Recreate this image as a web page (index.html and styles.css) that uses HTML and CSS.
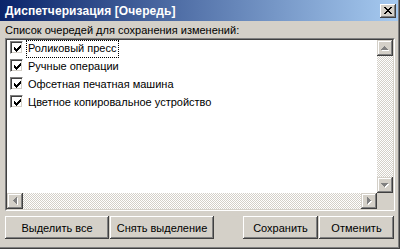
FILE: index.html
```html
<!DOCTYPE html>
<html lang="ru">
<head>
    <meta charset="UTF-8">
    <title>Диспетчеризация [Очередь]</title>
    <link rel="stylesheet" href="styles.css">
</head>
<body>
    <div class="window">
        <div class="titlebar">
            <span class="title">Диспетчеризация [Очередь]</span>
            <button class="close-btn">
                <svg width="8" height="7" viewBox="0 0 8 7" shape-rendering="crispEdges">
                    <path d="M0 0h2v1h-2zM6 0h2v1h-2zM1 1h2v1h-2zM5 1h2v1h-2zM2 2h4v1h-4zM3 3h2v1h-2zM2 4h4v1h-4zM1 5h2v1h-2zM5 5h2v1h-2zM0 6h2v1h-2zM6 6h2v1h-2z" fill="#000"/>
                </svg>
            </button>
        </div>

        <div class="content">
            <div class="label">Список очередей для сохранения изменений:</div>

            <div class="listbox">
                <div class="items">
                    <div class="item">
                        <span class="checkbox"><svg width="7" height="7" viewBox="0 0 7 7" shape-rendering="crispEdges"><path d="M0 2h1v3h-1zM1 3h1v3h-1zM2 4h1v3h-1zM3 3h1v3h-1zM4 2h1v3h-1zM5 1h1v3h-1zM6 0h1v3h-1z" fill="#000"/></svg></span>
                        <span class="item-text focused">Роликовый пресс</span>
                    </div>
                    <div class="item">
                        <span class="checkbox"><svg width="7" height="7" viewBox="0 0 7 7" shape-rendering="crispEdges"><path d="M0 2h1v3h-1zM1 3h1v3h-1zM2 4h1v3h-1zM3 3h1v3h-1zM4 2h1v3h-1zM5 1h1v3h-1zM6 0h1v3h-1z" fill="#000"/></svg></span>
                        <span class="item-text">Ручные операции</span>
                    </div>
                    <div class="item">
                        <span class="checkbox"><svg width="7" height="7" viewBox="0 0 7 7" shape-rendering="crispEdges"><path d="M0 2h1v3h-1zM1 3h1v3h-1zM2 4h1v3h-1zM3 3h1v3h-1zM4 2h1v3h-1zM5 1h1v3h-1zM6 0h1v3h-1z" fill="#000"/></svg></span>
                        <span class="item-text">Офсетная печатная машина</span>
                    </div>
                    <div class="item">
                        <span class="checkbox"><svg width="7" height="7" viewBox="0 0 7 7" shape-rendering="crispEdges"><path d="M0 2h1v3h-1zM1 3h1v3h-1zM2 4h1v3h-1zM3 3h1v3h-1zM4 2h1v3h-1zM5 1h1v3h-1zM6 0h1v3h-1z" fill="#000"/></svg></span>
                        <span class="item-text">Цветное копировальное устройство</span>
                    </div>
                </div>

                <!-- vertical scrollbar (disabled) -->
                <div class="vscroll">
                    <span class="arrow-btn">
                        <svg width="8" height="5" viewBox="0 0 8 5" shape-rendering="crispEdges"><path d="M4 1h1v1h-1zM3 2h3v1h-3zM2 3h5v1h-5zM1 4h7v1h-7z" fill="#fff"/><path d="M3 0h1v1h-1zM2 1h3v1h-3zM1 2h5v1h-5zM0 3h7v1h-7z" fill="#808080"/></svg>
                    </span>
                    <span class="track"></span>
                    <span class="arrow-btn">
                        <svg width="8" height="5" viewBox="0 0 8 5" shape-rendering="crispEdges"><path d="M1 1h7v1h-7zM2 2h5v1h-5zM3 3h3v1h-3zM4 4h1v1h-1z" fill="#fff"/><path d="M0 0h7v1h-7zM1 1h5v1h-5zM2 2h3v1h-3zM3 3h1v1h-1z" fill="#808080"/></svg>
                    </span>
                </div>

                <!-- horizontal scrollbar (disabled) -->
                <div class="hscroll">
                    <span class="arrow-btn">
                        <svg width="5" height="8" viewBox="0 0 5 8" shape-rendering="crispEdges"><path d="M1 4h1v1h-1zM2 3h1v3h-1zM3 2h1v5h-1zM4 1h1v7h-1z" fill="#fff"/><path d="M0 3h1v1h-1zM1 2h1v3h-1zM2 1h1v5h-1zM3 0h1v7h-1z" fill="#808080"/></svg>
                    </span>
                    <span class="track"></span>
                    <span class="arrow-btn">
                        <svg width="5" height="8" viewBox="0 0 5 8" shape-rendering="crispEdges"><path d="M1 1h1v7h-1zM2 2h1v5h-1zM3 3h1v3h-1zM4 4h1v1h-1z" fill="#fff"/><path d="M0 0h1v7h-1zM1 1h1v5h-1zM2 2h1v3h-1zM3 3h1v1h-1z" fill="#808080"/></svg>
                    </span>
                </div>

                <div class="corner"></div>
            </div>

            <div class="buttons">
                <div class="btn-group">
                    <button class="btn wide">Выделить все</button>
                    <button class="btn wide">Снять выделение</button>
                </div>
                <div class="btn-group">
                    <button class="btn">Сохранить</button>
                    <button class="btn">Отменить</button>
                </div>
            </div>
        </div>
    </div>
</body>
</html>
```

FILE: styles.css
```css
* {
    box-sizing: border-box;
}

body {
    margin: 0;
    background: #d4d0c8;
    font-family: "Liberation Sans", Arial, sans-serif;
    font-size: 11px;
    color: #000;
}

.window {
    width: 400px;
    height: 249px;
    background: #d4d0c8;
    display: flex;
    flex-direction: column;
    /* window frame, top/left are cut off by the capture */
    box-shadow: inset -1px -1px #404040, inset -2px -2px #808080;
}

/* Title bar */
.titlebar {
    height: 21px;
    background: linear-gradient(to right, #0a246a, #a6caf0);
    display: flex;
    align-items: center;
    justify-content: space-between;
    padding: 0 2px 0 5px;
    margin-right: 2px;
}

.title {
    color: #fff;
    font-weight: bold;
    font-size: 12px;
    letter-spacing: 0.1px;
}

.close-btn {
    width: 16px;
    height: 14px;
    padding: 0;
    border: none;
    background: #d4d0c8;
    display: flex;
    align-items: center;
    justify-content: center;
    box-shadow: inset -1px -1px #404040, inset 1px 1px #fff, inset -2px -2px #808080, inset 2px 2px #d4d0c8;
}

/* Body */
.content {
    flex: 1;
    display: flex;
    flex-direction: column;
    padding: 0 5px;
}

.label {
    height: 17px;
    line-height: 14px;
    padding-top: 2px;
}

.listbox {
    height: 173px;
    display: grid;
    grid-template-columns: 1fr 16px;
    grid-template-rows: 1fr 16px;
    border: 2px solid;
    border-color: #808080 #fff #fff #808080;
    background: #fff;
    position: relative;
}

.listbox::before {
    content: "";
    position: absolute;
    inset: -1px;
    border: 1px solid;
    border-color: #404040 #d4d0c8 #d4d0c8 #404040;
    pointer-events: none;
}

.items {
    overflow: hidden;
}

.item {
    height: 18px;
    display: flex;
    align-items: flex-start;
    padding-left: 3px;
}

.checkbox {
    width: 13px;
    height: 13px;
    margin-top: 1px;
    margin-right: 3px;
    background: #fff;
    border: 1px solid;
    border-color: #808080 #fff #fff #808080;
    box-shadow: inset 1px 1px #404040, inset -1px -1px #d4d0c8;
    display: flex;
    align-items: center;
    justify-content: center;
    padding-left: 1px;
    padding-top: 1px;
}

.item-text {
    height: 18px;
    line-height: 15px;
    padding: 0 1px;
    border: 1px dotted transparent;
}

.item-text.focused {
    border-color: #000;
}

/* Scrollbars */
.vscroll {
    display: flex;
    flex-direction: column;
}

.hscroll {
    display: flex;
}

.track {
    flex: 1;
    background: repeating-conic-gradient(#fff 0 25%, #d4d0c8 0 50%) 0 0 / 2px 2px;
}

.arrow-btn {
    width: 16px;
    height: 16px;
    flex: none;
    background: #d4d0c8;
    display: flex;
    align-items: center;
    justify-content: center;
    box-shadow: inset -1px -1px #404040, inset 1px 1px #d4d0c8, inset -2px -2px #808080, inset 2px 2px #fff;
}

.corner {
    background: #d4d0c8;
}

/* Bottom buttons */
.buttons {
    display: flex;
    justify-content: space-between;
    margin-top: 5px;
    padding-right: 1px;
}

.btn-group {
    display: flex;
    gap: 1px;
}

.btn {
    width: 75px;
    height: 23px;
    padding: 0;
    border: none;
    background: #d4d0c8;
    font-family: "Liberation Sans", Arial, sans-serif;
    font-size: 11px;
    color: #000;
    box-shadow: inset -1px -1px #404040, inset 1px 1px #fff, inset -2px -2px #808080, inset 2px 2px #d4d0c8;
}

.btn.wide {
    width: 104px;
}
```
